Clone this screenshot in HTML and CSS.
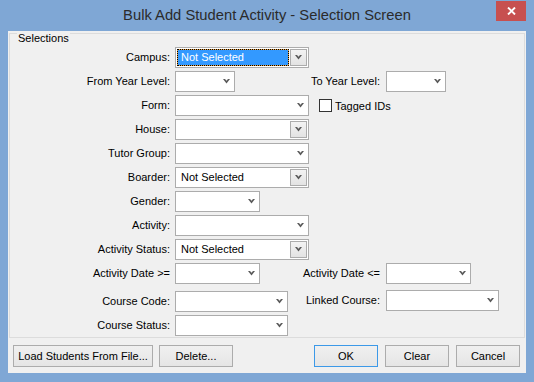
FILE: index.html
```
<!DOCTYPE html>
<html lang="en">
<head>
<meta charset="utf-8">
<title>Bulk Add Student Activity - Selection Screen</title>
<link rel="stylesheet" href="styles.css">
</head>
<body>
<div class="window">
  <div class="titlebar">
    <span class="title">Bulk Add Student Activity - Selection Screen</span>
    <button class="close" aria-label="Close"><svg width="9" height="8" viewBox="0 0 9 8"><path d="M1 0.5L8 7.5M8 0.5L1 7.5" stroke="#fff" stroke-width="1.9" fill="none"/></svg></button>
  </div>
  <div class="client">
    <div class="group">
      <div class="group-title">Selections</div>
      <div class="form">
        <span class="lbl">Campus:</span>
        <div class="combo boxed ctl w-lg focused"><span class="val">Not Selected</span><span class="dd"><svg class="chev" width="7" height="5" viewBox="0 0 7 5"><path d="M0 0H2L3.5 1.8L5 0H7L3.5 4.5Z"/></svg></span></div>

        <span class="lbl">From Year Level:</span>
        <div class="combo ctl w-xs"><svg class="chev" width="7" height="5" viewBox="0 0 7 5"><path d="M0 0H2L3.5 1.8L5 0H7L3.5 4.5Z"/></svg></div>
        <span class="rlbl">To Year Level:</span>
        <div class="combo rctl w-xs"><svg class="chev" width="7" height="5" viewBox="0 0 7 5"><path d="M0 0H2L3.5 1.8L5 0H7L3.5 4.5Z"/></svg></div>

        <span class="lbl">Form:</span>
        <div class="combo ctl w-lg"><svg class="chev" width="7" height="5" viewBox="0 0 7 5"><path d="M0 0H2L3.5 1.8L5 0H7L3.5 4.5Z"/></svg></div>
        <label class="check"><span class="box"></span>Tagged IDs</label>

        <span class="lbl">House:</span>
        <div class="combo boxed ctl w-lg"><span class="val"></span><span class="dd"><svg class="chev" width="7" height="5" viewBox="0 0 7 5"><path d="M0 0H2L3.5 1.8L5 0H7L3.5 4.5Z"/></svg></span></div>

        <span class="lbl">Tutor Group:</span>
        <div class="combo ctl w-lg"><svg class="chev" width="7" height="5" viewBox="0 0 7 5"><path d="M0 0H2L3.5 1.8L5 0H7L3.5 4.5Z"/></svg></div>

        <span class="lbl">Boarder:</span>
        <div class="combo boxed ctl w-lg"><span class="val">Not Selected</span><span class="dd"><svg class="chev" width="7" height="5" viewBox="0 0 7 5"><path d="M0 0H2L3.5 1.8L5 0H7L3.5 4.5Z"/></svg></span></div>

        <span class="lbl">Gender:</span>
        <div class="combo ctl w-sm"><svg class="chev" width="7" height="5" viewBox="0 0 7 5"><path d="M0 0H2L3.5 1.8L5 0H7L3.5 4.5Z"/></svg></div>

        <span class="lbl">Activity:</span>
        <div class="combo ctl w-lg"><svg class="chev" width="7" height="5" viewBox="0 0 7 5"><path d="M0 0H2L3.5 1.8L5 0H7L3.5 4.5Z"/></svg></div>

        <span class="lbl">Activity Status:</span>
        <div class="combo boxed ctl w-lg"><span class="val">Not Selected</span><span class="dd"><svg class="chev" width="7" height="5" viewBox="0 0 7 5"><path d="M0 0H2L3.5 1.8L5 0H7L3.5 4.5Z"/></svg></span></div>

        <span class="lbl">Activity Date &gt;=</span>
        <div class="combo ctl w-sm"><svg class="chev" width="7" height="5" viewBox="0 0 7 5"><path d="M0 0H2L3.5 1.8L5 0H7L3.5 4.5Z"/></svg></div>
        <span class="rlbl">Activity Date &lt;=</span>
        <div class="combo rctl w-sm"><svg class="chev" width="7" height="5" viewBox="0 0 7 5"><path d="M0 0H2L3.5 1.8L5 0H7L3.5 4.5Z"/></svg></div>

        <span class="lbl">Course Code:</span>
        <div class="combo ctl w-md"><svg class="chev" width="7" height="5" viewBox="0 0 7 5"><path d="M0 0H2L3.5 1.8L5 0H7L3.5 4.5Z"/></svg></div>
        <span class="rlbl up">Linked Course:</span>
        <div class="combo rctl w-md up"><svg class="chev" width="7" height="5" viewBox="0 0 7 5"><path d="M0 0H2L3.5 1.8L5 0H7L3.5 4.5Z"/></svg></div>

        <span class="lbl">Course Status:</span>
        <div class="combo ctl w-md"><svg class="chev" width="7" height="5" viewBox="0 0 7 5"><path d="M0 0H2L3.5 1.8L5 0H7L3.5 4.5Z"/></svg></div>
      </div>
    </div>
    <div class="buttons">
      <button class="push load">Load Students From File...</button>
      <button class="push delete">Delete...</button>
      <button class="push std ok">OK</button>
      <button class="push std">Clear</button>
      <button class="push std">Cancel</button>
    </div>
  </div>
</div>
</body>
</html>
```
FILE: styles.css
```
* { box-sizing: border-box; }

body {
  margin: 0;
  font-family: "Liberation Sans", Arial, sans-serif;
  font-size: 11px;
  color: #000;
}

.window {
  width: 534px;
  height: 382px;
  background: #7fa7d5;
  display: flex;
  flex-direction: column;
}

.titlebar {
  height: 31px;
  flex: none;
  display: grid;
  grid-template-columns: 1fr auto 1fr;
}

.title {
  grid-column: 2;
  font-size: 14.75px;
  line-height: 17px;
  padding-top: 7px;
  color: #2b2b2b;
  white-space: nowrap;
}

.close {
  grid-column: 3;
  justify-self: end;
  align-self: start;
  width: 30px;
  height: 20px;
  margin: 1px 8px 0 0;
  padding: 0;
  border: 0;
  background: #c75050;
  display: flex;
  align-items: center;
  justify-content: center;
}

.client {
  flex: 1;
  margin: 0 8px 9px 8px;
  padding: 2px 1px 0;
  background: #f0f0f0;
  display: flex;
  flex-direction: column;
}

.group {
  border: 1px solid #dcdcdc;
  padding-bottom: 1px;
}

.group-title {
  width: max-content;
  margin: -2px 0 0 7px;
  padding: 0 1px;
  line-height: 13px;
  background: #f0f0f0;
}

.form {
  display: grid;
  grid-template-columns: 165px 124px 87px 1fr;
  grid-template-rows: repeat(9, 24px) 28px 24px 21px;
  margin-top: 2px;
  align-items: start;
}

.lbl {
  grid-column: 1;
  text-align: right;
  padding-right: 5px;
  line-height: 21px;
  white-space: nowrap;
}

.rlbl {
  grid-column: 3;
  text-align: right;
  padding-right: 6px;
  line-height: 21px;
  white-space: nowrap;
}

.ctl { grid-column: 2; }
.rctl { grid-column: 4; }
.up { margin-top: -1px; }

.w-xs { width: 60px; }
.w-sm { width: 85px; }
.w-md { width: 113px; }
.w-lg { width: 134px; }

.combo {
  height: 21px;
  border: 1px solid #acacac;
  background: #fff;
  display: flex;
  align-items: center;
  justify-content: flex-end;
  padding-right: 4px;
}

.chev { fill: #5a5a5a; display: block; }

.combo.boxed {
  padding: 1px;
  align-items: stretch;
}

.val {
  flex: 1;
  margin-right: 1px;
  padding-left: 3px;
  border: 1px solid transparent;
  line-height: 15px;
  white-space: nowrap;
}

.focused .val {
  color: #fff;
  border: 1px dotted #000;
  background: linear-gradient(#3399ff, #3399ff) padding-box, linear-gradient(#e8a040, #e8a040) border-box;
}

.dd {
  width: 17px;
  border: 1px solid #acacac;
  background: linear-gradient(#f3f3f3, #e3e3e3);
  display: flex;
  align-items: center;
  justify-content: center;
}

.check {
  grid-column: 3 / 5;
  height: 21px;
  padding-left: 20px;
  display: flex;
  align-items: center;
  gap: 3px;
}

.box {
  width: 13px;
  height: 13px;
  border: 1px solid #333;
  background: #fff;
}

.buttons {
  display: flex;
  gap: 7px;
  margin-top: 7px;
  padding: 0 5px 0 4px;
}

.push {
  height: 22px;
  padding: 0;
  border: 1px solid #acacac;
  background: linear-gradient(#f0f0f0, #e5e5e5);
  font: inherit;
  color: #000;
}

.load { width: 140px; }
.delete { width: 74px; margin-left: -1px; }
.std { width: 64px; }
.ok { margin-left: auto; border-color: #3c99e8; }
```
